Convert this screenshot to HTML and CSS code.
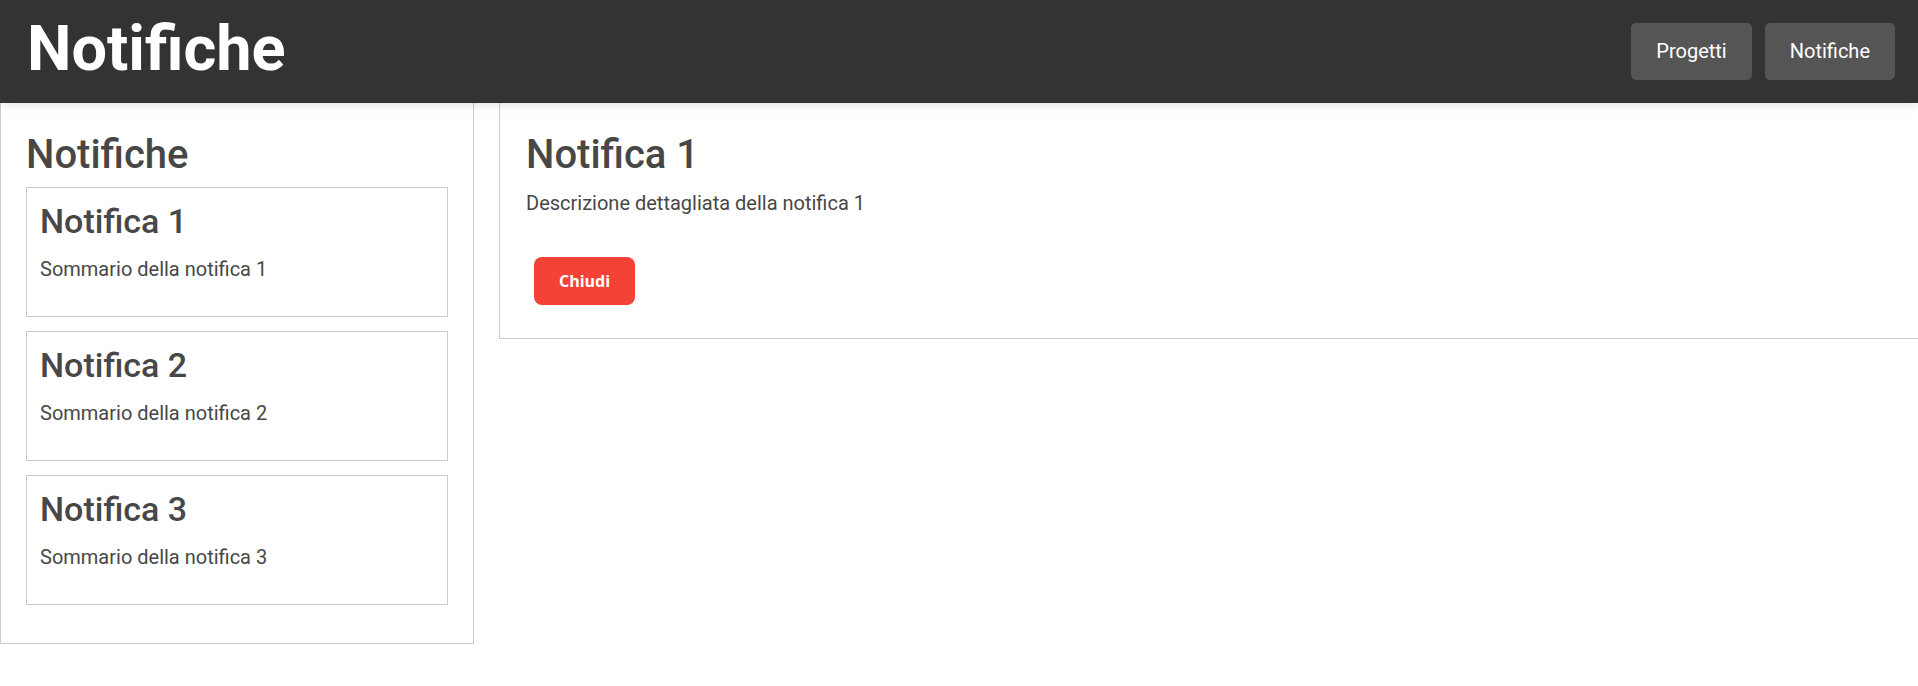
FILE: index.html
```html
<!DOCTYPE html>
<html lang="it">
<head>
<meta charset="utf-8">
<title>Notifiche</title>
<link rel="stylesheet" href="styles.css">
</head>
<body>
<header class="topbar">
  <h1 class="brand">Notifiche</h1>
  <nav class="nav">
    <button class="nav-btn">Progetti</button>
    <button class="nav-btn">Notifiche</button>
  </nav>
</header>
<main class="layout">
  <section class="list-panel">
    <h2 class="panel-title">Notifiche</h2>
    <div class="cards">
      <article class="card">
        <h3 class="card-title">Notifica 1</h3>
        <p class="card-text">Sommario della notifica 1</p>
      </article>
      <article class="card">
        <h3 class="card-title">Notifica 2</h3>
        <p class="card-text">Sommario della notifica 2</p>
      </article>
      <article class="card">
        <h3 class="card-title">Notifica 3</h3>
        <p class="card-text">Sommario della notifica 3</p>
      </article>
    </div>
  </section>
  <section class="detail-panel">
    <h2 class="panel-title">Notifica 1</h2>
    <p class="detail-text">Descrizione dettagliata della notifica 1</p>
    <button class="close-btn">Chiudi</button>
  </section>
</main>
</body>
</html>
```
FILE: styles.css
```css
html, body {
  margin: 0;
  padding: 0;
  background: #fff;
  overflow: hidden;
}
body {
  font-family: Roboto, "Liberation Sans", sans-serif;
  color: #474747;
}
.topbar {
  position: relative;
  z-index: 1;
  height: 103px;
  box-sizing: border-box;
  background: #333;
  display: flex;
  align-items: center;
  justify-content: space-between;
  padding: 0 23px 0 27px;
  box-shadow: 0 2px 10px rgba(0, 0, 0, 0.12);
}
.brand {
  margin: 0 0 6px 0;
  color: #fff;
  font-size: 63px;
  font-weight: 700;
  line-height: 1;
}
.nav {
  display: flex;
  gap: 13px;
}
.nav-btn {
  background: #555;
  color: #fff;
  border: none;
  border-radius: 5px;
  font-family: Roboto, "Liberation Sans", sans-serif;
  font-size: 20px;
  height: 57px;
  padding: 0 25px;
  margin-bottom: 1px;
}
.layout {
  display: flex;
  align-items: flex-start;
  gap: 25px;
}
.list-panel {
  width: 474px;
  box-sizing: border-box;
  border: 1px solid #ccc;
  border-top: none;
  padding: 28px 25px 38px 25px;
}
.panel-title {
  margin: 0;
  font-size: 40px;
  font-weight: 500;
  line-height: 47px;
}
.cards {
  display: flex;
  flex-direction: column;
  gap: 14px;
  margin-top: 9px;
}
.card {
  border: 1px solid #ccc;
  padding: 13px;
}
.card-title {
  margin: 0;
  font-size: 34px;
  font-weight: 500;
  line-height: 40px;
}
.card-text {
  margin: 17px 0 22px 0;
  font-size: 20px;
  line-height: 23px;
}
.detail-panel {
  flex: 1;
  margin-right: -2px;
  border: 1px solid #ccc;
  border-top: none;
  padding: 28px 26px 33px 26px;
}
.detail-text {
  margin: 14px 0 0 0;
  font-size: 20px;
  line-height: 23px;
}
.close-btn {
  display: block;
  margin: 42px 0 0 8px;
  width: 101px;
  height: 48px;
  border: none;
  border-radius: 8px;
  background: #f44336;
  color: #fff;
  font-family: "Open Sans", "DejaVu Sans", sans-serif;
  font-weight: 700;
  font-size: 16px;
}
```
